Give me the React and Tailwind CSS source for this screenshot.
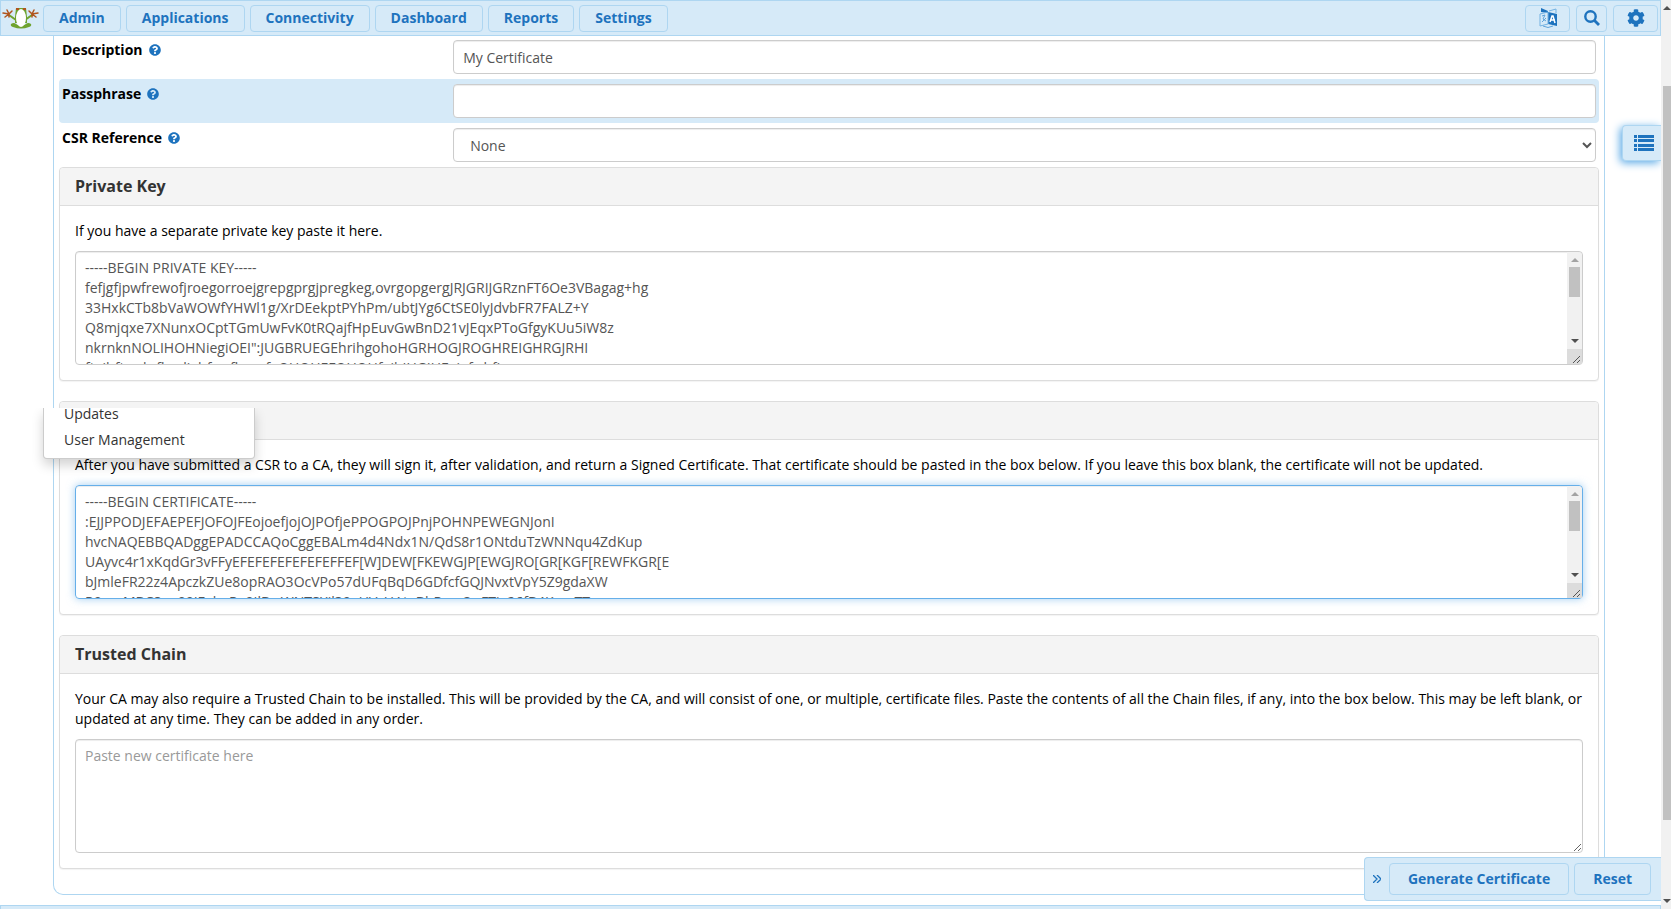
import { useState } from 'react'
import { FaQuestionCircle, FaCog } from 'react-icons/fa'

const menuItems = ['Admin', 'Applications', 'Connectivity', 'Dashboard', 'Reports', 'Settings']

const privateKey = `-----BEGIN PRIVATE KEY-----
fefjgfjpwfrewofjroegorroejgrepgprgjpregkeg,ovrgopgergJRJGRIJGRznFT6Oe3VBagag+hg
33HxkCTb8bVaWOWfYHWl1g/XrDEekptPYhPm/ubtJYg6CtSE0lyJdvbFR7FALZ+Y
Q8mjqxe7XNunxOCptTGmUwFvK0tRQajfHpEuvGwBnD21vJEqxPToGfgyKUu5iW8z
nkrnknNOLIHOHNiegiOEI":JUGBRUEGEhrihgohoHGRHOGJROGHREIGHRGJRHI
ftejhftweh-flweljehfewflewnfeOUOHEFOUOHfeihIUGIUEejefwhfi`

const certificate = `-----BEGIN CERTIFICATE-----
:EJJPPODJEFAEPEFJOFOJFEojoefjojOJPOfjePPOGPOJPnjPOHNPEWEGNJonI
hvcNAQEBBQADggEPADCCAQoCggEBALm4d4Ndx1N/QdS8r1ONtduTzWNNqu4ZdKup
UAyvc4r1xKqdGr3vFFyEFEFEFEFEFEFEFFEF[W]DEW[FKEWGJP[EWGJRO[GR[KGF[REWFKGR[E
bJmleFR22z4ApczkZUe8opRAO3OcVPo57dUFqBqD6GDfcfGQJNvxtVpY5Z9gdaXW
R9moMBC8ao09IFehaRa0IlBwWNTSXjl39eUVzHAteBhRwuQuFTia26fB4KmeTT`

function FrogLogo() {
  return (
    <svg viewBox="0 0 38 24" className="h-6 w-[38px]" aria-hidden="true">
      <g fill="none" strokeLinecap="round">
        <path d="M8 9l7 5M31 9l-7 5" stroke="#6fa32f" strokeWidth="2" />
        <path d="M8 8L2 7M8 8L4 11M8 8L6 4M8 8l3-3M8 8v3" stroke="#b0541e" strokeWidth="1.5" />
        <path d="M31 8l6-1M31 8l4 3M31 8l2-4M31 8l-3-3M31 8v3" stroke="#b0541e" strokeWidth="1.5" />
      </g>
      <path d="M10 18q3-2 5 0 5 3 10 0 2-2 5 0 1 2-2 3-8 3-16 0-3-1-2-3z" fill="#6fa32f" />
      <path d="M15 2h10l1 9v6H14v-6z" fill="#6fa32f" />
      <ellipse cx="20" cy="12" rx="5" ry="9" fill="#fff" />
      <path d="M15 2h3v2h-3zM22 2h3v2h-3z" fill="#b0541e" />
    </svg>
  )
}

function TranslateIcon() {
  return (
    <svg viewBox="0 0 18 20" className="h-5 w-[18px]" aria-hidden="true">
      <path d="M2 0l7 3v2L2 4z" fill="#1e73be" />
      <path d="M9 4l9 2v12l-9-2z" fill="#1e73be" />
      <path d="M1 6l8-2v12l-8 2zM10 3l7-2v4" fill="none" stroke="#74b3e3" />
      <path d="M3 8l3-1-2 4M3 14l4-4M4 11l3 2M4 18q5 3 10 0" fill="none" stroke="#5ea3da" />
      <path d="M11 14l2-6h1l2 7M12 12h4" fill="none" stroke="#fff" strokeWidth="1.500" />
    </svg>
  )
}

function SearchIcon() {
  return (
    <svg viewBox="0 0 16 16" className="size-4" fill="none" stroke="#1e73be" aria-hidden="true">
      <circle cx="6.500" cy="6.500" r="5.200" strokeWidth="2.400" />
      <path d="M10.500 10.500L15 15" strokeWidth="2.800" />
    </svg>
  )
}

function ListIcon() {
  return (
    <svg viewBox="0 0 20 16" className="h-4 w-5" fill="#1e73be" aria-hidden="true">
      <path d="M0 0h3v3H0zM4 0h16v3H4zM0 4h3v3H0zM4 4h16v3H4zM0 9h3v3H0zM4 9h16v3H4zM0 13h3v3H0zM4 13h16v3H4z" />
    </svg>
  )
}

function Arrow({ up, light }) {
  return (
    <svg viewBox="0 0 8 4" className="h-1 w-2 shrink-0" fill={light ? '#a3a3a3' : '#505050'} aria-hidden="true">
      <path d={up ? 'M0 4l4-4 4 4z' : 'M0 0l4 4 4-4z'} />
    </svg>
  )
}

function NavButton({ children, label, className = 'px-[15px]' }) {
  return (
    <button
      type="button"
      aria-label={label}
      className={`flex h-[27px] items-center justify-center rounded border border-[#aed6f1] font-bold text-[#1e73be] ${className}`}
    >
      {children}
    </button>
  )
}

function FieldRow({ id, label, active, children }) {
  return (
    <div className={`flex rounded-sm px-[3px] py-[5px] ${active ? 'bg-[#d6eaf8]' : ''}`}>
      <div className="flex w-[25.5%] items-start gap-1.5">
        <label htmlFor={id} className="font-bold">{label}</label>
        <FaQuestionCircle className="mt-1 size-3 text-[#1e73be]" />
      </div>
      <div className="flex-1">{children}</div>
    </div>
  )
}

const inputClass =
  'block h-[34px] w-full rounded border border-[#ccc] bg-white px-[9px] text-[#555] shadow-[inset_0_1px_1px_rgba(0,0,0,0.075)] outline-none'

function Panel({ id, title, text, value, onChange, focused, placeholder }) {
  return (
    <section className="mb-5 rounded border border-[#ddd] bg-white shadow-[0_1px_1px_rgba(0,0,0,0.05)]">
      <div className="h-[38px] rounded-t border-b border-[#ddd] bg-[#f4f4f4] px-[15px] py-2">
        {title && <h3 className="text-base/5 font-bold text-[#333]">{title}</h3>}
      </div>
      <div className="p-[15px]">
        <label htmlFor={id} className="mb-2.5 block">{text}</label>
        <div className="relative">
          <textarea
            id={id}
            value={value}
            placeholder={placeholder}
            spellCheck={false}
            onChange={(e) => onChange(e.target.value)}
            className={`block h-[114px] w-full rounded border px-[9px] py-1.5 text-[#555] outline-none placeholder:text-[#999] ${
              focused
                ? 'border-[#66afe9] shadow-[inset_0_1px_1px_rgba(0,0,0,0.075),0_0_8px_rgba(102,175,233,0.6)]'
                : 'border-[#ccc] shadow-[inset_0_1px_1px_rgba(0,0,0,0.075)]'
            }`}
          />
          {value && (
            <div className="pointer-events-none absolute inset-y-px right-px flex w-[15px] flex-col items-center rounded-r-sm bg-[#f1f1f1] pt-1.5">
              <Arrow up light />
              <div className="mt-[5px] h-[30px] w-[11px] bg-[#c1c1c1]" />
              <div className="flex-1" />
              <Arrow />
              <div className="mt-1.5 flex h-[15px] w-full items-end justify-end bg-[#dcdcdc] p-px">
                <svg viewBox="0 0 8 8" className="size-2" stroke="#555" aria-hidden="true">
                  <path d="M0 8l7-7M4 8l3-3" />
                </svg>
              </div>
            </div>
          )}
        </div>
      </div>
    </section>
  )
}

export default function App() {
  const [description, setDescription] = useState('My Certificate')
  const [passphrase, setPassphrase] = useState('')
  const [keyText, setKeyText] = useState(privateKey)
  const [certText, setCertText] = useState(certificate)
  const [chainText, setChainText] = useState('')

  return (
    <div className="relative flex h-screen overflow-hidden bg-white font-['Open_Sans',sans-serif] text-sm/5 text-black">
      <div className="flex min-w-0 flex-1 flex-col">
        <header className="relative z-10 -mb-px flex h-9 shrink-0 items-center border border-[#aed6f1] bg-[#d6eaf8] pr-0.5">
          <FrogLogo />
          <nav className="ml-1 flex flex-1 gap-[5px]">
            {menuItems.map((item) => (
              <NavButton key={item}>{item}</NavButton>
            ))}
          </nav>
          <div className="flex gap-1.5">
            <NavButton label="Language" className="w-[45px]"><TranslateIcon /></NavButton>
            <NavButton label="Search" className="w-[31px]"><SearchIcon /></NavButton>
            <NavButton label="Options" className="w-[45px]"><FaCog className="size-[18px]" /></NavButton>
          </div>
        </header>

        <main className="mr-14 ml-[53px] shrink-0 rounded-b-[10px] border border-t-0 border-[#aed6f1] px-[5px] pb-[5px]">
          <FieldRow id="description" label="Description">
            <input id="description" className={inputClass} value={description} onChange={(e) => setDescription(e.target.value)} />
          </FieldRow>
          <FieldRow id="passphrase" label="Passphrase" active>
            <input id="passphrase" type="password" className={inputClass} value={passphrase} onChange={(e) => setPassphrase(e.target.value)} />
          </FieldRow>
          <FieldRow id="csr" label="CSR Reference">
            <select id="csr" className="block h-[34px] w-full rounded border border-[#ccc] bg-white px-3 text-[#555] shadow-[inset_0_1px_1px_rgba(0,0,0,0.075)]">
              <option>None</option>
            </select>
          </FieldRow>

          <Panel id="key" title="Private Key" text="If you have a separate private key paste it here." value={keyText} onChange={setKeyText} />
          <Panel
            id="cert"
            text="After you have submitted a CSR to a CA, they will sign it, after validation, and return a Signed Certificate. That certificate should be pasted in the box below. If you leave this box blank, the certificate will not be updated."
            value={certText}
            onChange={setCertText}
            focused
          />
          <Panel
            id="chain"
            title="Trusted Chain"
            text="Your CA may also require a Trusted Chain to be installed. This will be provided by the CA, and will consist of one, or multiple, certificate files. Paste the contents of all the Chain files, if any, into the box below. This may be left blank, or updated at any time. They can be added in any order."
            value={chainText}
            onChange={setChainText}
            placeholder="Paste new certificate here"
          />
        </main>
        <footer className="mt-2.5 h-9 shrink-0 border border-[#aed6f1] bg-[#d6eaf8]" />
      </div>

      {/* page scrollbar */}
      <div className="relative z-20 flex w-2.5 shrink-0 flex-col items-end bg-[#f1f1f1] py-1.5">
        <Arrow up />
        <div className="mt-[76px] h-[734px] w-2 bg-[#c1c1c1]" />
        <div className="flex-1" />
        <Arrow />
      </div>

      {/* tail of the Admin drop-down */}
      <div className="absolute top-[408px] left-[23px] overflow-hidden px-5 pb-5">
        <ul className="w-[212px] rounded-b border border-t-0 border-black/20 bg-white pb-2 pl-5 text-[#333] shadow-[0_6px_12px_rgba(0,0,0,0.175)]">
          <li className="leading-3"><a href="#updates">Updates</a></li>
          <li className="mt-2.5 leading-5"><a href="#users">User Management</a></li>
        </ul>
      </div>

      <button
        type="button"
        aria-label="Contents"
        className="absolute top-[125px] right-2.5 flex h-9 w-[39px] items-center rounded-l border border-r-0 border-[#aed6f1] bg-[#d6eaf8] pl-[11px] shadow-[-2px_2px_8px_#5aa9e6]"
      >
        <ListIcon />
      </button>

      <div className="absolute right-2.5 bottom-2 flex items-center gap-[5px] rounded-l border border-r-0 border-[#aed6f1] bg-[#d6eaf8] py-[5px] pr-2.5 pl-2 font-bold text-[#1e73be]">
        <button type="button" aria-label="Collapse" className="mr-[3px]">
          <svg viewBox="0 0 8 8" className="size-2" fill="none" stroke="currentColor" strokeWidth="1.300" aria-hidden="true">
            <path d="M0 0l4 4-4 4M4 0l4 4-4 4" />
          </svg>
        </button>
        <button type="button" className="h-8 rounded border border-[#aed6f1] px-[18px]">Generate Certificate</button>
        <button type="button" className="h-8 rounded border border-[#aed6f1] px-[18px]">Reset</button>
      </div>
    </div>
  )
}
